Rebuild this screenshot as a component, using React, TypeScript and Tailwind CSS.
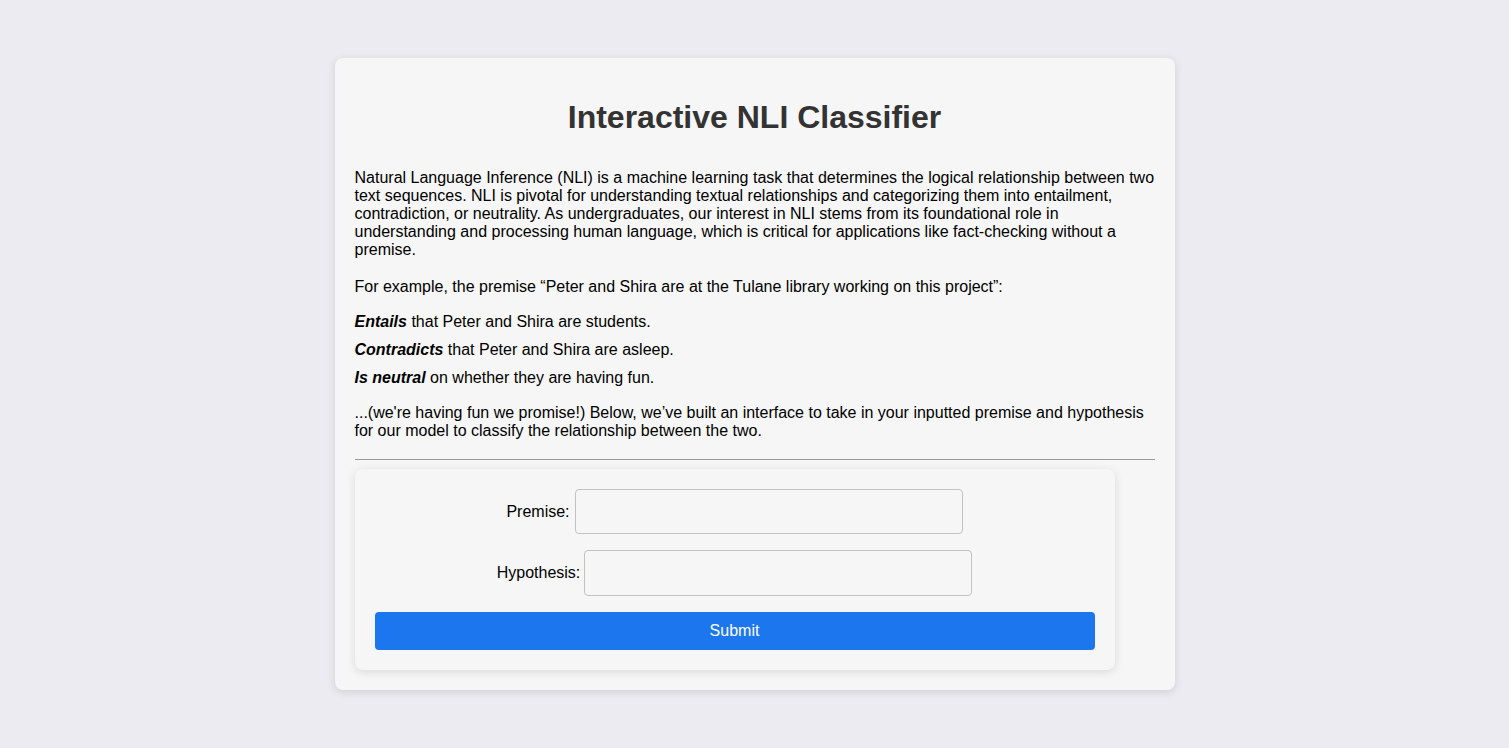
export default function App() {
  return (
    <div className="min-h-screen bg-[#ecebf1] flex items-center justify-center font-['Liberation_Sans',Arial,sans-serif]">
      <div className="w-[840px] bg-[#f6f6f6] rounded-lg shadow-[0_2px_8px_rgba(0,0,0,0.12)] p-5">
        <h1 className="mt-[21px] text-center text-[32px] leading-[37px] font-bold text-[#333]">
          Interactive NLI Classifier
        </h1>

        <div className="text-[16px] leading-[18px] text-black">
          <p className="mt-[33px]">
            Natural Language Inference (NLI) is a machine learning task that determines the logical relationship between two
            text sequences. NLI is pivotal for understanding textual relationships and categorizing them into entailment,
            contradiction, or neutrality. As undergraduates, our interest in NLI stems from its foundational role in
            understanding and processing human language, which is critical for applications like fact-checking without a
            premise.
          </p>
          <p className="mt-[19px]">
            For example, the premise “Peter and Shira are at the Tulane library working on this project”:
          </p>
          <p className="mt-[17px]">
            <b className="italic">Entails</b> that Peter and Shira are students.
          </p>
          <p className="mt-[10px]">
            <b className="italic">Contradicts</b> that Peter and Shira are asleep.
          </p>
          <p className="mt-[10px]">
            <b className="italic">Is neutral</b> on whether they are having fun.
          </p>
          <p className="mt-[17px]">
            ...(we're having fun we promise!) Below, we’ve built an interface to take in your inputted premise and hypothesis
            for our model to classify the relationship between the two.
          </p>
        </div>

        <hr className="mt-[19px] border-t border-[#9a9a9a]" />

        <form
          className="mt-[9px] w-[760px] rounded-lg bg-[#f6f6f6] p-5 shadow-[0_2px_10px_rgba(0,0,0,0.12)]"
          onSubmit={(e) => e.preventDefault()}
        >
          <div className="flex items-center justify-center gap-[5px]">
            <label className="text-[16px] text-black">Premise:</label>
            <input
              type="text"
              className="w-[388px] h-[45px] rounded border border-[#c2c2c2] bg-transparent px-2 outline-none"
            />
          </div>
          <div className="mt-4 flex items-center justify-center gap-[4px]">
            <label className="text-[16px] text-black">Hypothesis:</label>
            <input
              type="text"
              className="w-[388px] h-[46px] rounded border border-[#c2c2c2] bg-transparent px-2 outline-none"
            />
          </div>
          <button
            type="submit"
            className="mt-4 w-full h-[38px] rounded bg-[#1c77ef] text-white text-[16px]"
          >
            Submit
          </button>
        </form>
      </div>
    </div>
  );
}
